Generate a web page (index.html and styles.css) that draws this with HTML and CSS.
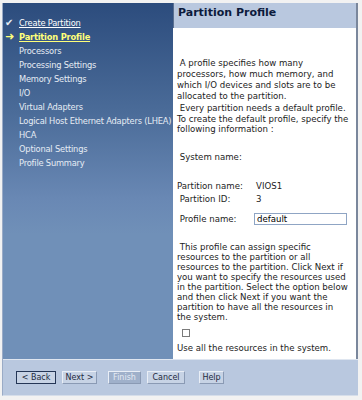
FILE: index.html
```html
<!DOCTYPE html>
<html>
  <head>
    <meta charset="utf-8"/>
    <title>Create Partition</title>
    <link rel="stylesheet" href="styles.css">
  </head>
  <body>
    <div class="wizard">
      <div class="main">
        <ul class="steps">
          <li class="done"><span class="mark">&#10004;</span><a href="#">Create Partition</a></li>
          <li class="current"><span class="mark">&#10140;</span><a href="#">Partition Profile</a></li>
          <li><span class="mark"></span>Processors</li>
          <li><span class="mark"></span>Processing Settings</li>
          <li><span class="mark"></span>Memory Settings</li>
          <li><span class="mark"></span>I/O</li>
          <li><span class="mark"></span>Virtual Adapters</li>
          <li><span class="mark"></span>Logical Host Ethernet Adapters (LHEA)</li>
          <li><span class="mark"></span>HCA</li>
          <li><span class="mark"></span>Optional Settings</li>
          <li><span class="mark"></span>Profile Summary</li>
        </ul>
        <div class="panel">
          <h1>Partition Profile</h1>
          <div class="body">
            <p class="intro">&nbsp;A profile specifies how many processors, how much memory, and which I/O devices and slots are to be allocated to the partition.</p>
            <p class="need">&nbsp;Every partition needs a default profile. To create the default profile, specify the following information :</p>
            <div class="system">&nbsp;System name:</div>
            <div class="fields">
              <span>Partition name:</span><span>VIOS1</span>
              <span>&nbsp;Partition ID:</span><span>3</span>
            </div>
            <div class="profile">
              <label for="pname">&nbsp;Profile name:</label>
              <input id="pname" type="text" value="default">
            </div>
            <p class="assign">&nbsp;This profile can assign specific resources to the partition or all resources to the partition. Click Next if you want to specify the resources used in the partition. Select the option below and then click Next if you want the partition to have all the resources in the system.</p>
            <div class="check"><input type="checkbox"></div>
            <div class="useall">Use all the resources in the system.</div>
          </div>
        </div>
      </div>
      <div class="buttons">
        <button class="back">&lt; Back</button>
        <button class="next">Next &gt;</button>
        <button class="finish" disabled>Finish</button>
        <button class="cancel">Cancel</button>
        <button class="help">Help</button>
      </div>
    </div>
  </body>
</html>
```

FILE: styles.css
```css
* {
  margin: 0;
  padding: 0;
  box-sizing: border-box;
}

html {
  font-family: 'DejaVu Sans', Verdana, sans-serif;
  font-size: 8.6px;
  color: #1c1c1c;
}

body {
  background: #f2f2f2;
}

.wizard {
  width: 356px;
  height: 393px;
  margin: 3px 0 0 2px;
  background: #b9c8df;
  border-left: 1px solid #9aabc6;
  border-bottom: 1px solid #d6deea;
}

.main {
  display: flex;
  height: 356px;
}

/* left side step list */
.steps {
  width: 170px;
  list-style: none;
  padding-top: 13px;
  background: linear-gradient(#2c4c7d 0%, #4a6b98 30%, #6988b4 55%, #7090b8 65%, #7090b8 100%);
  color: #e6ecf4;
  font-size: 8.3px;
  letter-spacing: -0.2px;
}

.steps li {
  line-height: 14px;
  padding-left: 2px;
  white-space: nowrap;
}

.mark {
  display: inline-block;
  width: 14px;
  font-size: 10px;
}

.steps a {
  color: #fff;
}

.steps .current a {
  color: #ffff7a;
  font-weight: bold;
}

.steps .current .mark {
  color: #ffff7a;
  font-weight: bold;
  font-size: 11px;
}

/* right side content */
.panel {
  flex: 1;
  background: #fff;
  border-right: 2px solid #7a879c;
}

.panel h1 {
  height: 25px;
  padding: 3px 4px 2px;
  font-size: 11px;
  font-weight: bold;
  color: #0c1a3c;
  background: #b9c8df;
  border-left: 1px solid #5a6f90;
}

.body {
  padding: 0 5px 0 4px;
  line-height: 10.5px;
}

.intro {
  margin-top: 30px;
  line-height: 11px;
}

.need {
  margin-top: 1px;
}

.system {
  margin-top: 17px;
}

.fields {
  display: grid;
  grid-template-columns: 79px auto;
  row-gap: 2px;
  margin-top: 19px;
}

.profile {
  display: flex;
  align-items: center;
  margin-top: 9px;
}

.profile label {
  width: 77px;
}

.profile input {
  width: 93px;
  height: 12px;
  padding: 0 2px;
  font: inherit;
  color: #000;
  border: 1px solid #8fa5c4;
}

.assign {
  margin: 17px 3px 0 0;
  line-height: 10px;
}

.check {
  margin-top: 7px;
  padding-left: 5px;
  height: 12px;
}

.check input {
  appearance: none;
  width: 8px;
  height: 8px;
  border: 1px solid #7b7b7b;
  background: #fff;
}

.useall {
  margin-top: 2px;
}

/* bottom button bar */
.buttons {
  display: flex;
  align-items: center;
  height: 36px;
  padding-left: 13px;
  border-top: 1px solid #dfe6f0;
}

.buttons button {
  height: 13px;
  font-family: 'DejaVu Sans', Verdana, sans-serif;
  font-size: 8px;
  color: #1e2a40;
  background: #c7d3e5;
  border: 1px solid #e9eef6;
  border-right-color: #8a9ab4;
  border-bottom-color: #8a9ab4;
}

.buttons .back {
  width: 40px;
  border: 1px solid #243656;
}

.buttons .next {
  width: 35px;
  margin-left: 6px;
}

.buttons .finish {
  width: 33px;
  margin-left: 11px;
  color: #e4eaf4;
  background: #9fb0ca;
}

.buttons .cancel {
  width: 38px;
  margin-left: 6px;
}

.buttons .help {
  width: 25px;
  margin-left: 14px;
}
```
